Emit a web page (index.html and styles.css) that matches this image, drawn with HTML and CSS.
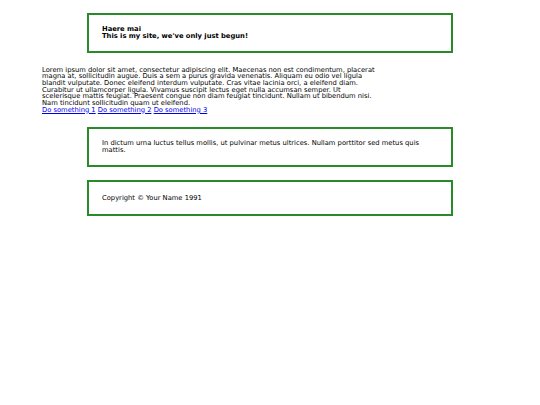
FILE: index.html
```html
<!DOCTYPE html>
<html>
<head>
<meta charset="utf-8">
<link rel="stylesheet" href="styles.css">
</head>
<body>
<div class="page">
  <header class="box header">
    <div class="title">Haere mai</div>
    <div class="title">This is my site, we've only just begun!</div>
  </header>
  <main class="main">
    <p class="lorem">Lorem ipsum dolor sit amet, consectetur adipiscing elit. Maecenas non est condimentum, placerat magna at, sollicitudin augue. Duis a sem a purus gravida venenatis. Aliquam eu odio vel ligula blandit vulputate. Donec eleifend interdum vulputate. Cras vitae lacinia orci, a eleifend diam. Curabitur ut ullamcorper ligula. Vivamus suscipit lectus eget nulla accumsan semper. Ut scelerisque mattis feugiat. Praesent congue non diam feugiat tincidunt. Nullam ut bibendum nisi. Nam tincidunt sollicitudin quam ut eleifend.</p>
    <nav class="links"><a href="#">Do something 1</a> <a href="#">Do something 2</a> <a href="#">Do something 3</a></nav>
  </main>
  <section class="box">In dictum urna luctus tellus mollis, ut pulvinar metus ultrices. Nullam porttitor sed metus quis mattis.</section>
  <footer class="box footer">Copyright &copy; Your Name 1991</footer>
</div>
</body>
</html>
```
FILE: styles.css
```css
html, body {
  margin: 0;
  padding: 0;
  background: #fff;
}
body {
  font-family: "DejaVu Sans", Verdana, sans-serif;
  font-size: 6.75px;
  line-height: 6.7px;
  color: #000;
}
.page {
  display: flex;
  flex-direction: column;
  padding-top: 13px;
}
.box {
  box-sizing: border-box;
  width: 366px;
  margin: 0 auto;
  border: 2px solid #2a8a2a;
  padding: 11.3px 12px 11.3px 13px;
}
.title {
  font-weight: bold;
}
.main {
  margin: 13.5px 0 13.5px 42px;
  width: 338px;
}
.lorem {
  margin: 0;
}
.links a {
  color: #0000ee;
}
.footer {
  margin-top: 13.5px;
  padding-top: 12.2px;
  padding-bottom: 12.2px;
}
```
